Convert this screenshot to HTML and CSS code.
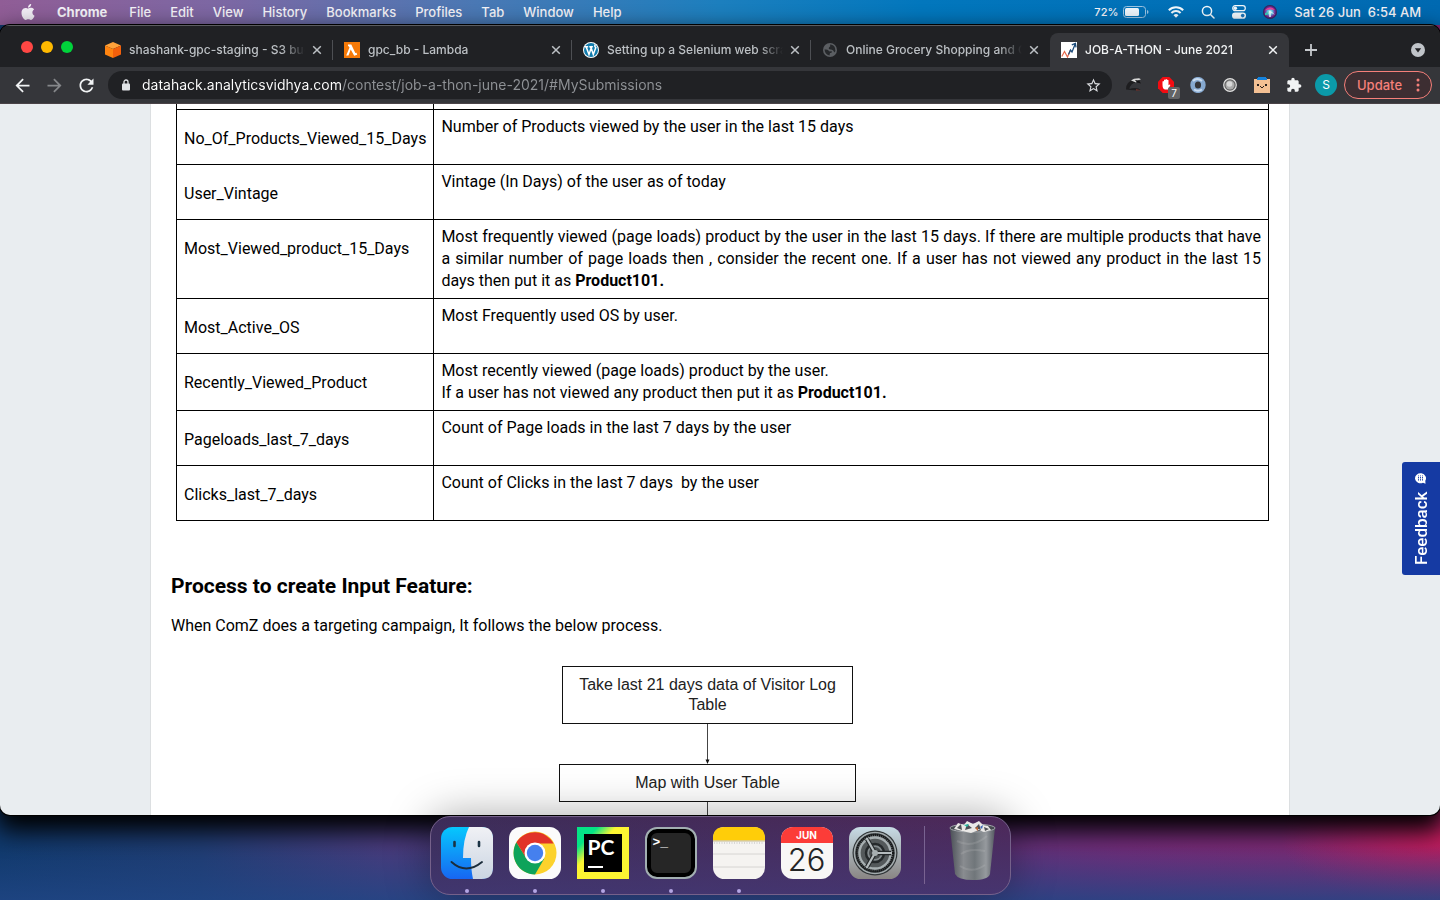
FILE: index.html
```html
<!DOCTYPE html>
<html lang="en">
<head>
<meta charset="utf-8">
<title>JOB-A-THON - June 2021</title>
<link rel="stylesheet" href="styles.css">
</head>
<body class="desktop">
<header class="menubar">
  <nav class="menus" aria-label="Menu bar">
    <svg class="apple" viewBox="0 0 24 24" width="16" height="16" fill="#f1edf5"><path d="M12.152 6.896c-.948 0-2.415-1.078-3.96-1.04-2.04.027-3.91 1.183-4.961 3.014-2.117 3.675-.546 9.103 1.519 12.09 1.013 1.454 2.208 3.09 3.792 3.039 1.52-.065 2.09-.987 3.935-.987 1.831 0 2.35.987 3.96.948 1.637-.026 2.676-1.48 3.676-2.948 1.156-1.688 1.636-3.325 1.662-3.415-.039-.013-3.182-1.221-3.22-4.857-.026-3.04 2.48-4.494 2.597-4.559-1.429-2.09-3.623-2.324-4.39-2.376-2-.156-3.675 1.09-4.61 1.09zM15.53 3.83c.843-1.012 1.4-2.427 1.245-3.83-1.207.052-2.662.805-3.532 1.818-.78.896-1.454 2.338-1.273 3.714 1.338.104 2.715-.688 3.559-1.701"/></svg>
    <button class="menu menu-app">Chrome</button>
    <button class="menu">File</button>
    <button class="menu">Edit</button>
    <button class="menu">View</button>
    <button class="menu">History</button>
    <button class="menu">Bookmarks</button>
    <button class="menu">Profiles</button>
    <button class="menu">Tab</button>
    <button class="menu">Window</button>
    <button class="menu">Help</button>
  </nav>
  <div class="status">
    <span class="battery"><span class="percent">72%</span>
      <svg width="26" height="12" viewBox="0 0 26 12"><rect x=".5" y=".5" width="22" height="11" rx="3" fill="none" stroke="#9cc4e2"/><rect x="2" y="2" width="14" height="8" rx="1.5" fill="#eef5fb"/><path d="M24 4v4q1.500-.5 1.500-2t-1.500-2z" fill="#9cc4e2"/></svg>
    </span>
    <svg width="16" height="12" viewBox="0 0 16 12" fill="none" stroke="#f2f8fc" stroke-width="2"><path d="M.8 4.300a10.200 10.200 0 0 1 14.400 0M3.400 7a6.500 6.500 0 0 1 9.200 0"/><path d="M8 11.800 5.500 9.200a3.600 3.600 0 0 1 5 0z" fill="#f2f8fc" stroke="none"/></svg>
    <svg width="14" height="14" viewBox="0 0 14 14" fill="none" stroke="#f2f8fc" stroke-width="1.500" stroke-linecap="round"><circle cx="6" cy="6" r="4.600"/><path d="M9.500 9.500 13 13"/></svg>
    <svg width="14" height="14" viewBox="0 0 14 14"><rect x=".7" y=".7" width="12.600" height="5" rx="2.500" fill="none" stroke="#f2f8fc" stroke-width="1.200"/><circle cx="3.300" cy="3.200" r="1.800" fill="#f2f8fc"/><rect y="7.500" width="14" height="6.300" rx="3.100" fill="#f2f8fc"/><circle cx="10.700" cy="10.600" r="1.800" fill="#1b74b8"/></svg>
    <svg width="14" height="14" viewBox="0 0 14 14"><defs><radialGradient id="siri"><stop offset="0" stop-color="#fff"/><stop offset=".35" stop-color="#5ac8e8"/><stop offset=".7" stop-color="#7a2a9a"/><stop offset="1" stop-color="#28204c"/></radialGradient></defs><circle cx="7" cy="7" r="7" fill="url(#siri)"/><path d="M1.500 5.500Q7 0 12 5q-5-1-10.500.5z" fill="#ee3d95"/><path d="M2 10q4-5 5-4 3 1 5 4-3-2-4-2v4H6V8z" fill="#e8fbff" opacity=".8"/><path d="M2 8q2 0 4-2-1 5-4 4z" fill="#35cbb8"/></svg>
    <time class="clock">Sat 26 Jun&nbsp; 6:54 AM</time>
  </div>
</header>

<div class="window">
  <div class="tabstrip">
    <div class="lights"><button class="light red" aria-label="Close"></button><button class="light amber" aria-label="Minimise"></button><button class="light green" aria-label="Zoom"></button></div>
    <div class="tab">
      <svg width="16" height="16" viewBox="0 0 16 16"><path d="m8 0 8 3.500L8 7 0 3.500z" fill="#ffa23a"/><path d="M0 3.500 8 7v9l-8-3.500z" fill="#ff8410"/><path d="M16 3.500 8 7v9l8-3.500z" fill="#f4600b"/></svg>
      <span class="tab-title">shashank-gpc-staging - S3 bucket</span>
      <button class="tab-close" aria-label="Close tab"><svg width="10" height="10" viewBox="0 0 10 10"><path d="m1.200 1.200 7.600 7.600m0-7.600L1.200 8.800"/></svg></button>
    </div>
    <div class="tab">
      <svg width="16" height="16" viewBox="0 0 16 16"><path fill="#f67a08" d="M0 0h16v16H0z"/><path d="M4 2.500h3.300l4 8.600 1.200-.4.700 2-3 1.100L6.700 7.500l-2.200 6H2.200l3.300-8-.7-1.200H4z" fill="#fff"/></svg>
      <span class="tab-title">gpc_bb - Lambda</span>
      <button class="tab-close" aria-label="Close tab"><svg width="10" height="10" viewBox="0 0 10 10"><path d="m1.200 1.200 7.600 7.600m0-7.600L1.200 8.800"/></svg></button>
    </div>
    <div class="tab">
      <svg width="16" height="16" viewBox="0 0 16 16"><circle cx="8" cy="8" r="8" fill="#fff"/><circle cx="8" cy="8" r="7" fill="#117bac"/><path d="M1.800 4.800h3.400M6.300 4.800h3.600M3.200 5 6 12.500 8.200 6 10.300 12.500 12.800 5.500Q11 4 12.400 2.600M7.500 5l.8 1.700" fill="none" stroke="#fff" stroke-width="1.500"/></svg>
      <span class="tab-title">Setting up a Selenium web scraper</span>
      <button class="tab-close" aria-label="Close tab"><svg width="10" height="10" viewBox="0 0 10 10"><path d="m1.200 1.200 7.600 7.600m0-7.600L1.200 8.800"/></svg></button>
    </div>
    <div class="tab">
      <svg width="16" height="16" viewBox="0 0 16 16"><circle cx="8" cy="8" r="7" fill="#5b5e62"/><path d="M2.500 7.500q3-.5 4 1t3 .5q1 2-1.500 2l-.5 2.600Q3 12.500 2.500 7.500zM8 2.500q4 0 5 3.500 1 3-.500 4.500Q11 7 8.500 7.500 6 7 7 5.500 9 4.500 8 2.500z" fill="#26282b"/></svg>
      <span class="tab-title">Online Grocery Shopping and Online</span>
      <button class="tab-close" aria-label="Close tab"><svg width="10" height="10" viewBox="0 0 10 10"><path d="m1.200 1.200 7.600 7.600m0-7.600L1.200 8.800"/></svg></button>
    </div>
    <div class="tab tab-active">
      <svg width="16" height="16" viewBox="0 0 16 16"><path fill="#fff" d="M0 0h16v16H0z"/><path d="m.8 14.500 2.700-5 3 5.500 3-7" fill="none" stroke="#e8674a" stroke-width="1.200"/><path d="m7.500 12.500 2-4.500 1.500 2L14 2.500M10.800 2.800l3.600-1.300.6 3.800" fill="none" stroke="#1d4d7c" stroke-width="1.300"/></svg>
      <span class="tab-title">JOB-A-THON - June 2021</span>
      <button class="tab-close" aria-label="Close tab"><svg width="10" height="10" viewBox="0 0 10 10"><path d="m1.200 1.200 7.600 7.600m0-7.600L1.200 8.800"/></svg></button>
    </div>
    <button class="new-tab" aria-label="New tab"><svg width="12" height="12" viewBox="0 0 12 12"><path d="M6 0v12M0 6h12" stroke="#c6c9cd" stroke-width="1.800"/></svg></button>
    <button class="tab-search" aria-label="Search tabs"><svg width="14" height="14" viewBox="0 0 14 14"><circle cx="7" cy="7" r="7" fill="#c0c4c9"/><path d="M3.800 5.200h6.400L7 9.500z" fill="#202124"/></svg></button>
  </div>

  <div class="toolbar">
    <button class="tool" aria-label="Back"><svg width="21" height="21" viewBox="0 0 24 24" fill="#f1f3f4"><path d="M20 11H7.830l5.590-5.590L12 4l-8 8 8 8 1.410-1.410L7.830 13H20v-2z"/></svg></button>
    <button class="tool" aria-label="Forward"><svg width="21" height="21" viewBox="0 0 24 24" fill="#85878a"><path d="m12 4-1.410 1.410L16.170 11H4v2h12.170l-5.580 5.590L12 20l8-8z"/></svg></button>
    <button class="tool" aria-label="Reload"><svg width="21" height="21" viewBox="0 0 24 24" fill="#f1f3f4"><path d="M17.650 6.350C16.200 4.900 14.210 4 12 4c-4.420 0-7.990 3.580-7.990 8s3.570 8 7.990 8c3.730 0 6.840-2.550 7.730-6h-2.080c-.82 2.330-3.040 4-5.650 4-3.310 0-6-2.690-6-6s2.690-6 6-6c1.660 0 3.140.69 4.220 1.780L13 11h7V4l-2.350 2.350z"/></svg></button>
    <div class="omnibox">
      <svg width="8" height="12" viewBox="0 0 8 12"><path d="M2 5V3a2 2 0 0 1 4 0v2" fill="none" stroke="#e2e4e7" stroke-width="1.300"/><rect y="4.500" width="8" height="7" rx="1" fill="#e2e4e7"/></svg>
      <input class="url" type="text" aria-label="Address" value="datahack.analyticsvidhya.com/contest/job-a-thon-june-2021/#MySubmissions">
      <button class="star" aria-label="Bookmark"><svg width="17" height="17" viewBox="0 0 24 24" fill="#d8dadd"><path d="M22 9.240l-7.190-.62L12 2 9.190 8.630 2 9.240l5.460 4.730L5.820 21 12 17.270 18.180 21l-1.630-7.030L22 9.240zM12 15.400l-3.760 2.270 1-4.280-3.320-2.880 4.380-.38L12 6.100l1.710 4.040 4.380.38-3.320 2.880 1 4.280L12 15.400z"/></svg></button>
    </div>
    <button class="tool" aria-label="Cap extension"><svg width="16" height="16" viewBox="0 0 16 16"><path d="M0 12.500Q0 4 8 3l3 2Q4 6.500 3.500 12q4-1.500 9-.5l2 1.500q-8 .5-14.500-.5z" fill="#1d1d1f"/><path d="m5 3.500 3-1.700 5-.6 2 1-3 1.300-2 2z" fill="#d9d9d9"/><path d="m9 3 4 .5 2 3-4-1z" fill="#131315"/><path d="m10 12 5 1.200-5 .6z" fill="#6b302b"/></svg></button>
    <button class="tool" aria-label="Ad blocker"><svg width="16" height="16" viewBox="0 0 16 16"><path d="M4.700 0h6.600L16 4.700v6.600L11.300 16H4.700L0 11.300V4.700z" fill="#f30c12"/><path d="M4.500 8V4.500q.8-1 1.500 0V3q.8-1 1.500 0v-.5q.8-1 1.500 0V3q1-.7 1.500.3v5l1-.8q1 0 .8.8L10 12.500H7Q4.500 12 4.500 8z" fill="#fff"/></svg><span class="badge">7</span></button>
    <button class="tool" aria-label="Ring extension"><svg width="16" height="16" viewBox="0 0 16 16"><ellipse cx="8" cy="8" rx="5.400" ry="5.800" fill="none" stroke="#86a9d0" stroke-width="4.600"/><path d="M3 4q4-4 9 0M4 12.500q4 2.500 8 0" stroke="#c9dcf0" stroke-width="2" fill="none"/></svg></button>
    <button class="tool" aria-label="Recorder extension"><svg width="16" height="16" viewBox="0 0 16 16"><circle cx="8" cy="8" r="6.300" fill="#626262" stroke="#e0e0e0" stroke-width="1.200"/><circle cx="8" cy="8" r="4.500" fill="#aaa"/><circle cx="7.500" cy="7" r="2.800" fill="#d8d8d8"/></svg></button>
    <button class="tool" aria-label="Box extension"><svg width="16" height="16" viewBox="0 0 16 16"><path d="M0 2h16v14H0z" fill="#f3c093"/><path d="M4 0h8v1h1v2H3V1h1z" fill="#1683dc"/><path d="M3 7h2v2H3zm8 0h2v2h-2zM6 9h1v1H6zm3 0h1v1H9zm-2 1h2v1H7z" fill="#29211d"/></svg></button>
    <button class="tool" aria-label="Extensions"><svg width="16" height="16" viewBox="0 0 24 24" fill="#f1f3f4"><path d="M20.500 11H19V7c0-1.100-.9-2-2-2h-4V3.500C13 2.120 11.880 1 10.500 1S8 2.120 8 3.500V5H4c-1.100 0-1.990.9-1.990 2v3.800H3.500c1.490 0 2.700 1.210 2.700 2.700s-1.210 2.700-2.700 2.700H2V20c0 1.100.9 2 2 2h3.800v-1.500c0-1.490 1.210-2.700 2.700-2.700 1.490 0 2.700 1.210 2.700 2.700V22H17c1.100 0 2-.9 2-2v-4h1.500c1.380 0 2.500-1.120 2.500-2.500S21.880 11 20.500 11z"/></svg></button>
    <button class="tool" aria-label="Profile"><span class="avatar">S</span></button>
    <button class="update">Update <svg width="4" height="14" viewBox="0 0 4 14" fill="#f5807a"><circle cx="2" cy="2" r="1.500"/><circle cx="2" cy="7" r="1.500"/><circle cx="2" cy="12" r="1.500"/></svg></button>
  </div>

  <div class="page">
    <main class="content">
      <table class="features">
        <tbody>
          <tr class="clipped"><td></td><td></td></tr>
          <tr><th scope="row">No_Of_Products_Viewed_15_Days</th><td>Number of Products viewed by the user in the last 15 days</td></tr>
          <tr><th scope="row">User_Vintage</th><td>Vintage (In Days) of the user as of today</td></tr>
          <tr><th scope="row">Most_Viewed_product_15_Days</th><td>Most frequently viewed (page loads) product by the user in the last 15 days. If there are multiple products that have a similar number of page loads then , consider the recent one. If a user has not viewed any product in the last 15 days then put it as <b>Product101.</b></td></tr>
          <tr><th scope="row">Most_Active_OS</th><td>Most Frequently used OS by user.</td></tr>
          <tr><th scope="row">Recently_Viewed_Product</th><td>Most recently viewed (page loads) product by the user.<br>If a user has not viewed any product then put it as <b>Product101.</b></td></tr>
          <tr><th scope="row">Pageloads_last_7_days</th><td>Count of Page loads in the last 7 days by the user</td></tr>
          <tr><th scope="row">Clicks_last_7_days</th><td>Count of Clicks in the last 7 days&nbsp; by the user</td></tr>
        </tbody>
      </table>
      <h2 class="heading">Process to create Input Feature:</h2>
      <p class="intro">When ComZ does a targeting campaign, It follows the below process.</p>
      <div class="flow">
        <div class="step step-first">Take last 21 days data of Visitor Log Table</div>
        <svg class="arrow" width="5" height="40" viewBox="0 0 5 40"><path d="M2.500 0v37" stroke="#444"/><path d="M.5 35.500h4L2.500 40z" fill="#111"/></svg>
        <div class="step">Map with User Table</div>
        <div class="stem"></div>
      </div>
    </main>
    <button class="feedback"><span>Feedback</span>
      <svg width="12" height="12" viewBox="0 0 12 12"><path d="M1.500.2 4 1.300a5.500 5 0 1 1-2.300 2z" fill="#fff"/><path d="M4.500 3.500v5M6.500 3.500v5M8.500 3.500v5" stroke="#153aa3" stroke-dasharray="1.300 .8"/></svg>
    </button>
  </div>
</div>

<footer class="shelf">
  <div class="dock">
    <div class="app running"><svg width="52" height="52" viewBox="0 0 52 52"><defs><linearGradient id="fb" x2="0" y2="1"><stop stop-color="#06c8fd"/><stop offset="1" stop-color="#1766f2"/></linearGradient><linearGradient id="fw" x2="0" y2="1"><stop stop-color="#f0f1f5"/><stop offset="1" stop-color="#cbd5e2"/></linearGradient></defs><rect width="52" height="52" rx="11.500" fill="url(#fb)"/><path d="M28 0h12.500Q52 0 52 11.500v29Q52 52 40.500 52H32q-2-9-2-21h-8Q22 12 28 0z" fill="url(#fw)"/><path d="M13.500 15v4M38 15v4" stroke="#1b3345" stroke-width="2.600" stroke-linecap="round"/><path d="M10.500 35Q25 48 41 35" fill="none" stroke="#1b2c3b" stroke-width="1.900" stroke-linecap="round"/></svg></div>
    <div class="app running"><svg width="52" height="52" viewBox="0 0 52 52"><rect width="52" height="52" rx="11.500" fill="#fbfbfb"/><circle cx="26" cy="26" r="21.500" fill="#fcd22c"/><path d="M26 35.500 16.900 30.500 7.400 15.300A21.500 21.500 0 0 0 26 47.500l9.300-16.100z" fill="#0ea35a"/><path d="M7.400 15.300a21.500 21.500 0 0 1 37.200 1.200H26l-9.100 14z" fill="#e13329"/><circle cx="26" cy="26" r="10.500" fill="#fff"/><circle cx="26" cy="26" r="8.200" fill="#4580ee"/></svg></div>
    <div class="app running"><div class="pycharm"><div class="pycharm-core">PC<span class="pycharm-bar"></span></div></div></div>
    <div class="app running"><div class="terminal">&gt;_</div></div>
    <div class="app running"><svg width="52" height="52" viewBox="0 0 52 52"><rect width="52" height="52" rx="11.500" fill="#f5f3f1"/><path d="M0 13.500v-2Q0 0 11.500 0h29Q52 0 52 11.500v2z" fill="#ffcd09"/><path d="M0 14h52" stroke="#c5b98d"/><path d="M1 16h50" stroke="#bbb" stroke-dasharray="1 1.500"/><path d="M0 27h52M0 40h52" stroke="#d6d4d2"/></svg></div>
    <div class="app"><div class="calendar"><span class="month">JUN</span><span class="day">26</span></div></div>
    <div class="app"><svg width="52" height="52" viewBox="0 0 52 52"><defs><linearGradient id="sg" x2="0" y2="1"><stop stop-color="#c7dbe5"/><stop offset="1" stop-color="#898583"/></linearGradient></defs><rect width="52" height="52" rx="11.500" fill="url(#sg)"/><circle cx="26" cy="26" r="22.500" fill="#303537"/><circle cx="26" cy="26" r="20.500" fill="none" stroke="#a3abad" stroke-width="1.600"/><circle cx="26" cy="26" r="18" fill="#6a7072" stroke="#151718" stroke-width="2.500" stroke-dasharray="1.300 .8"/><circle cx="26" cy="26" r="15.500" fill="#54595b" stroke="#a7afb1" stroke-width="2.300"/><circle cx="26" cy="26" r="9" fill="#838a8d" stroke="#25292b" stroke-width="2.500"/><circle cx="26" cy="26" r="6" fill="#494e50"/><path d="M26 26h16M26 26l-8-14M26 26l-8 14" stroke="#24282a" stroke-width="4.500"/><path d="M26 26h17M26 26l-8.500-15M26 26l-8.500 15" stroke="#b5bcbe" stroke-width="2.200"/><circle cx="26" cy="26" r="3" fill="#a7afb1"/></svg></div>
    <div class="divider"></div>
    <div class="app trash"><svg width="52" height="60" viewBox="0 0 52 60"><defs><linearGradient id="bin"><stop stop-color="#4b5057"/><stop offset=".3" stop-color="#898c90"/><stop offset=".55" stop-color="#70767a"/><stop offset=".8" stop-color="#969a9e"/><stop offset="1" stop-color="#535860"/></linearGradient></defs><path d="M4 7q22-7 45 0l-5 46q-2 6-17 6T9 53z" fill="url(#bin)"/><ellipse cx="26.500" cy="7" rx="22.500" ry="4" fill="#464a50" stroke="#a4a8ad"/><path d="m8 8 4-6 6 2 3-4 6 3 6-3 4 4 5 1 3 4-7 2-5-2-8 3-9-2z" fill="#ebe9e7"/><path d="m11 7 4-4 1 6zm10-4 5 4-7 2zm8 4 4-4 2 6zm9-1 5 2-4 2z" fill="#4e5056"/><path d="m18 4 5-1-2 3z" fill="#27bca7"/><path d="m29 7 3-1v4z" fill="#c16a38"/><path d="m34 6 3-2-1 4z" fill="#3864b4"/><path d="M11 20q15 8 30-5M14 45q12 8 25-1M15 33q8-6 24-3" fill="none" stroke="#d2d4d6" stroke-width="2" opacity=".16"/></svg></div>
  </div>
</footer>
</body>
</html>
```
FILE: styles.css
```css
* { box-sizing: border-box; }

.desktop {
  margin: 0;
  height: 100vh;
  display: flex;
  flex-direction: column;
  overflow: hidden;
  font-family: Inter, "Liberation Sans", sans-serif;
  background:
    linear-gradient(to bottom, rgba(32, 70, 133, 0) 94%, rgba(32, 70, 133, .8) 100%),
    radial-gradient(ellipse 160px 70px at 100% 93%, #c01c5c, rgba(192, 28, 92, 0)),
    linear-gradient(to right, #10396c, #203c72 14%, #493b7c 27%, #503878 60%, #702c78 78%, #862870);
}

button {
  border: 0;
  padding: 0;
  background: none;
  color: inherit;
  font: inherit;
}

svg { display: block; flex: none; }

/* Menu bar */
.menubar {
  display: flex;
  justify-content: space-between;
  align-items: center;
  flex: none;
  height: 25px;
  padding: 0 19px 2px 20px;
  font-size: 13px;
  font-weight: 500;
  color: #f4f3f8;
  background: linear-gradient(to right, #905d96, #7b68a4 16%, #4a78b4 33%, #1c7fbe 50%, #0277bd 64%, #0069b1);
}
.menus { display: flex; align-items: center; gap: 19px; text-shadow: 0 1px 2px rgba(0, 0, 0, .25); }
.menu-app { margin: 0 3px 0 2px; font-weight: 700; }
.status { display: flex; align-items: center; gap: 17px; }
.battery { display: flex; align-items: center; gap: 5px; margin-right: 2px; }
.percent { font-size: 11px; }

/* Browser window */
.window {
  flex: 1;
  min-height: 0;
  display: flex;
  flex-direction: column;
  overflow: hidden;
  border-radius: 10px;
  background: #35363a;
  box-shadow: 0 0 0 1px #000, 0 12px 24px 4px #000;
}
.tabstrip {
  display: flex;
  align-items: flex-end;
  flex: none;
  height: 42px;
  padding-right: 15px;
  background: #202124;
  border-top: 1px solid #5b5c5f;
}
.lights { display: flex; align-self: center; gap: 8px; width: 94px; padding-left: 21px; flex: none; }
.light { width: 12px; height: 12px; border-radius: 50%; }
.red { background: #ff4744; }
.amber { background: #ffb900; }
.green { background: #00d33b; }
.tab {
  position: relative;
  display: flex;
  align-items: center;
  flex: 0 1 239px;
  min-width: 0;
  height: 34px;
  padding: 0 11px;
  color: #bcc0c4;
}
.tab::after {
  content: "";
  position: absolute;
  right: 0;
  top: 7px;
  width: 1px;
  height: 20px;
  background: #4d4f53;
}
.tab:nth-child(5)::after, .tab-active::after { display: none; }
.tab-active { background: #35363a; color: #f1f3f4; border-radius: 8px 8px 0 0; }
.tab-title {
  flex: 1;
  min-width: 0;
  margin: 0 7px 0 8px;
  overflow: hidden;
  white-space: nowrap;
  font-size: 12px;
  line-height: 18px;
  font-weight: 500;
  mask-image: linear-gradient(to left, transparent, #000 24px);
}
.tab-close { stroke: currentColor; stroke-width: 1.5; fill: none; }
.new-tab { margin-left: 16px; height: 34px; }
.tab-search { margin-left: auto; height: 34px; }

.toolbar {
  display: flex;
  align-items: center;
  flex: none;
  height: 37px;
  padding: 0 8px 0 6px;
  border-bottom: 1px solid #4a4347;
}
.tool {
  position: relative;
  display: grid;
  place-items: center;
  flex: none;
  width: 32px;
  height: 28px;
}
.omnibox {
  display: flex;
  align-items: center;
  flex: 1;
  min-width: 0;
  height: 28px;
  margin: 0 6px;
  padding: 0 10px 0 14px;
  border-radius: 14px;
  background: #202124;
}
.url {
  flex: 1;
  min-width: 0;
  margin-left: 12px;
  padding: 0;
  border: 0;
  outline: 0;
  font: 400 14px/20px Inter, sans-serif;
  color: #9aa0a6;
  background: linear-gradient(to right, #fff 200px, #8f9296 200px);
  background-clip: text;
  -webkit-background-clip: text;
  -webkit-text-fill-color: transparent;
}
.badge {
  position: absolute;
  right: 2px;
  bottom: 0;
  width: 12px;
  border-radius: 2px;
  background: #636466;
  color: #fff;
  font-size: 10px;
  line-height: 12px;
}
.avatar { width: 22px; border-radius: 50%; background: #0b9aa9; color: #fff; font-size: 12px; line-height: 22px; }
.update {
  display: flex;
  align-items: center;
  justify-content: space-between;
  flex: none;
  width: 88px;
  height: 28px;
  margin-left: 2px;
  padding: 0 11px 0 12px;
  border: 1px solid #f5807a;
  border-radius: 14px;
  background: #3d2e32;
  color: #f5807a;
  font-size: 13px;
  font-weight: 500;
}

/* Contest page */
.page {
  position: relative;
  flex: 1;
  min-height: 0;
  overflow: hidden;
  padding: 0 150px;
  background: #e9edf0;
  font-family: Roboto, sans-serif;
  font-size: 16px;
  line-height: 22px;
  color: #000;
}
.content {
  min-height: 100%;
  padding: 0 20px;
  border: solid #dcdfe1;
  border-width: 0 1px;
  background: #fff;
}
.features { width: calc(100% - 5px); margin-left: 5px; border-collapse: collapse; }
.features th, .features td { border: 1px solid #000; text-align: left; vertical-align: top; font-weight: 400; }
.features th { width: 257px; padding: 18px 7px 14px; }
.features td { padding: 6px 7px; text-align: justify; }
.features .clipped td { height: 5px; padding: 0; border-top: 0; }
.heading { margin: 50px 0 0; font-size: 21px; line-height: 30px; font-weight: 700; }
.intro { margin: 14px 0 0; }
.flow {
  display: flex;
  flex-direction: column;
  align-items: center;
  margin: 29px 25px 0 0;
  font: 16px/20px "Liberation Sans", sans-serif;
  color: #222;
}
.step { width: 297px; padding: 8px 12px; border: 1px solid #111; text-align: center; }
.step-first { width: 291px; }
.stem { width: 1px; height: 40px; background: #444; }

.feedback {
  position: absolute;
  top: 358px;
  right: 0;
  display: flex;
  align-items: center;
  gap: 8px;
  height: 113px;
  width: 38px;
  padding: 8px 0;
  justify-content: center;
  writing-mode: vertical-rl;
  transform: rotate(180deg);
  border-radius: 0 3px 3px 0;
  background: #153aa3;
  color: #fff;
  font: 500 17px/20px Roboto, sans-serif;
}

/* Dock */
.shelf { position: relative; display: flex; justify-content: center; flex: none; height: 85px; padding-top: 1px; }
.dock {
  display: flex;
  gap: 16px;
  height: 79px;
  padding: 10px 12px 10px 10px;
  border: 1px solid #75618a;
  border-radius: 20px;
  background: linear-gradient(to top, rgba(67, 58, 120, .7), rgba(72, 42, 85, .2)), linear-gradient(to right, #392d58, #4f285a);
  box-shadow: 0 0 44px rgba(0, 0, 0, .35);
}
.app { position: relative; display: flex; justify-content: center; flex: none; width: 52px; height: 52px; }
.trash { align-items: flex-end; margin: 2px 0 0 -3px; }
.running::after {
  content: "";
  position: absolute;
  bottom: -14px;
  width: 4px;
  height: 4px;
  border-radius: 50%;
  background: #b4a6e4;
}
.divider { width: 1px; height: 58px; margin: -1px 8px 0 7px; background: #796391; }
.pycharm { width: 52px; height: 52px; padding: 7px; background: linear-gradient(135deg, #04e486 20%, #fcf532 38%); }
.pycharm-core {
  height: 38px;
  padding: 2px 0 0 4px;
  background: #000;
  color: #fff;
  font: 700 21px/22px Lato, sans-serif;
}
.pycharm-bar { display: block; width: 15px; height: 2px; margin-top: 8px; background: #fff; }
.terminal {
  width: 52px;
  height: 52px;
  padding: 5px 6px;
  border: 2px solid #a2afb1;
  border-radius: 12px;
  background: #262626;
  box-shadow: inset 0 0 0 4px #000;
  color: #fff;
  font: 700 13px/18px "Liberation Mono", monospace;
}
.calendar { width: 52px; height: 52px; border-radius: 12px; overflow: hidden; background: #f8f7f6; text-align: center; }
.month { display: block; background: #fc3c38; color: #fff; font-size: 10px; line-height: 16px; font-weight: 700; }
.day { display: block; color: #242424; font-size: 31px; line-height: 34px; font-weight: 300; }
```
